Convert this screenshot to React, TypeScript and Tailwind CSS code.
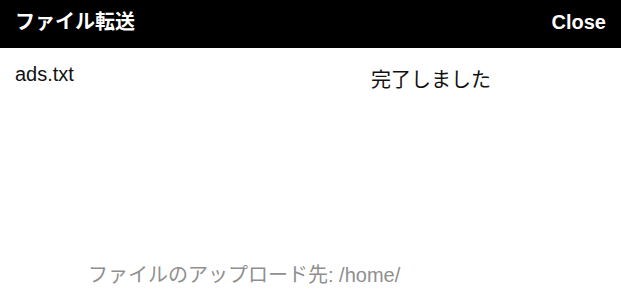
export default function App() {
  const font = { fontFamily: '"Liberation Sans", "Noto Sans CJK JP", sans-serif' };
  return (
    <div className="flex h-[294px] w-full flex-col bg-white" style={font}>
      <div className="flex h-[48px] items-center justify-between bg-black px-[15px] pb-[4px] text-[20px] font-bold text-white">
        <span>ファイル転送</span>
        <span>Close</span>
      </div>
      <div className="flex flex-1 px-[15px] pt-[14px] text-[20px] leading-[24px] text-[#111]">
        <div className="w-[356px]">ads.txt</div>
        <div className="pt-[6px]">完了しました</div>
      </div>
      <div className="pb-[7px] pl-[88px] text-[20px] leading-[24px] text-[#8f8f8f]">
        ファイルのアップロード先: /home/
      </div>
    </div>
  );
}
